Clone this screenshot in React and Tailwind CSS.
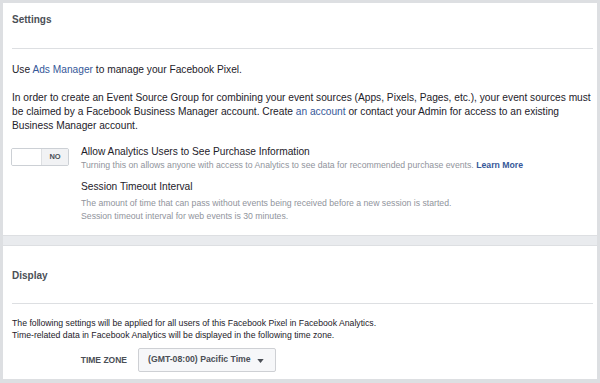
import React from 'react';

const font = { fontFamily: '"Liberation Sans", Arial, Helvetica, sans-serif' };

const Toggle = () => (
  <div className="flex h-[18px] w-[58px] shrink-0 overflow-hidden rounded-[2px] border border-[#ccd0d5]">
    <div className="w-[29px] bg-white" />
    <div className="flex flex-1 items-center justify-center border-l border-[#dddfe2] bg-[#f1f2f4] text-[7.5px] font-bold text-[#4b4f56]">
      NO
    </div>
  </div>
);

const App = () => {
  return (
    <div className="h-[383px] w-[600px] bg-[#dddfe2] pt-[3px] pl-[3px] pr-[3px] pb-[4px]" style={font}>
      <div className="flex h-full flex-col bg-white">
        {/* Settings */}
        <div className="pl-[9px] pr-[4px]">
          <div className="pt-[10px] h-[45px] text-[10px] leading-[14px] font-bold text-[#4b4f56]">Settings</div>
          <div className="h-px bg-[#dddfe2]" />
          <p className="mt-[14px] text-[10.2px] leading-[14px] text-[#1d2129]">
            Use <span className="text-[#365899]">Ads Manager</span> to manage your Facebook Pixel.
          </p>
          <p className="mt-[14px] text-[10.2px] leading-[14px] text-[#1d2129]">
            In order to create an Event Source Group for combining your event sources (Apps, Pixels, Pages, etc.), your event sources must
            be claimed by a Facebook Business Manager account. Create <span className="text-[#365899]">an account</span> or contact your Admin for access to an existing
            Business Manager account.
          </p>
          <div className="mt-[12px] flex gap-[12px]">
            <div className="pt-[3px] -ml-[1px]">
              <Toggle />
            </div>
            <div>
              <div className="text-[10.2px] leading-[14px] text-[#1d2129]">Allow Analytics Users to See Purchase Information</div>
              <div className="text-[8.7px] leading-[13px] text-[#90949c]">
                Turning this on allows anyone with access to Analytics to see data for recommended purchase events.{' '}
                <span className="font-bold text-[#365899]">Learn More</span>
              </div>
              <div className="mt-[8px] text-[10.2px] leading-[14px] text-[#1d2129]">Session Timeout Interval</div>
              <div className="mt-[3px] text-[8.7px] leading-[13px] text-[#90949c]">
                The amount of time that can pass without events being received before a new session is started.
                <br />
                Session timeout interval for web events is 30 minutes.
              </div>
            </div>
          </div>
        </div>

        <div className="mt-[12px] h-[11px] border-y border-[#dddfe2] bg-[#e9ebee]" />

        {/* Display */}
        <div className="pl-[9px] pr-[4px]">
          <div className="pt-[23px] h-[57px] text-[10px] leading-[14px] font-bold text-[#4b4f56]">Display</div>
          <div className="h-px bg-[#dddfe2]" />
          <p className="mt-[13px] text-[8.7px] leading-[12px] text-[#1d2129]">
            The following settings will be applied for all users of this Facebook Pixel in Facebook Analytics.
            <br />
            Time-related data in Facebook Analytics will be displayed in the following time zone.
          </p>
          <div className="mt-[7px] flex items-center">
            <div className="w-[126px] pr-[11px] text-right text-[8.5px] font-bold text-[#4b4f56]">TIME ZONE</div>
            <div className="flex h-[24px] w-[138px] items-center gap-[6px] rounded-[2px] border border-[#ced0d4] bg-[#f6f7f9] pl-[9px] text-[8.7px] font-bold text-[#4b4f56]">
              (GMT-08:00) Pacific Time
              <svg width="7" height="4" viewBox="0 0 8 5" className="mt-[1px]">
                <path d="M0 0h8L4 5z" fill="#4b4f56" />
              </svg>
            </div>
          </div>
        </div>
      </div>
    </div>
  );
};

export default App;
